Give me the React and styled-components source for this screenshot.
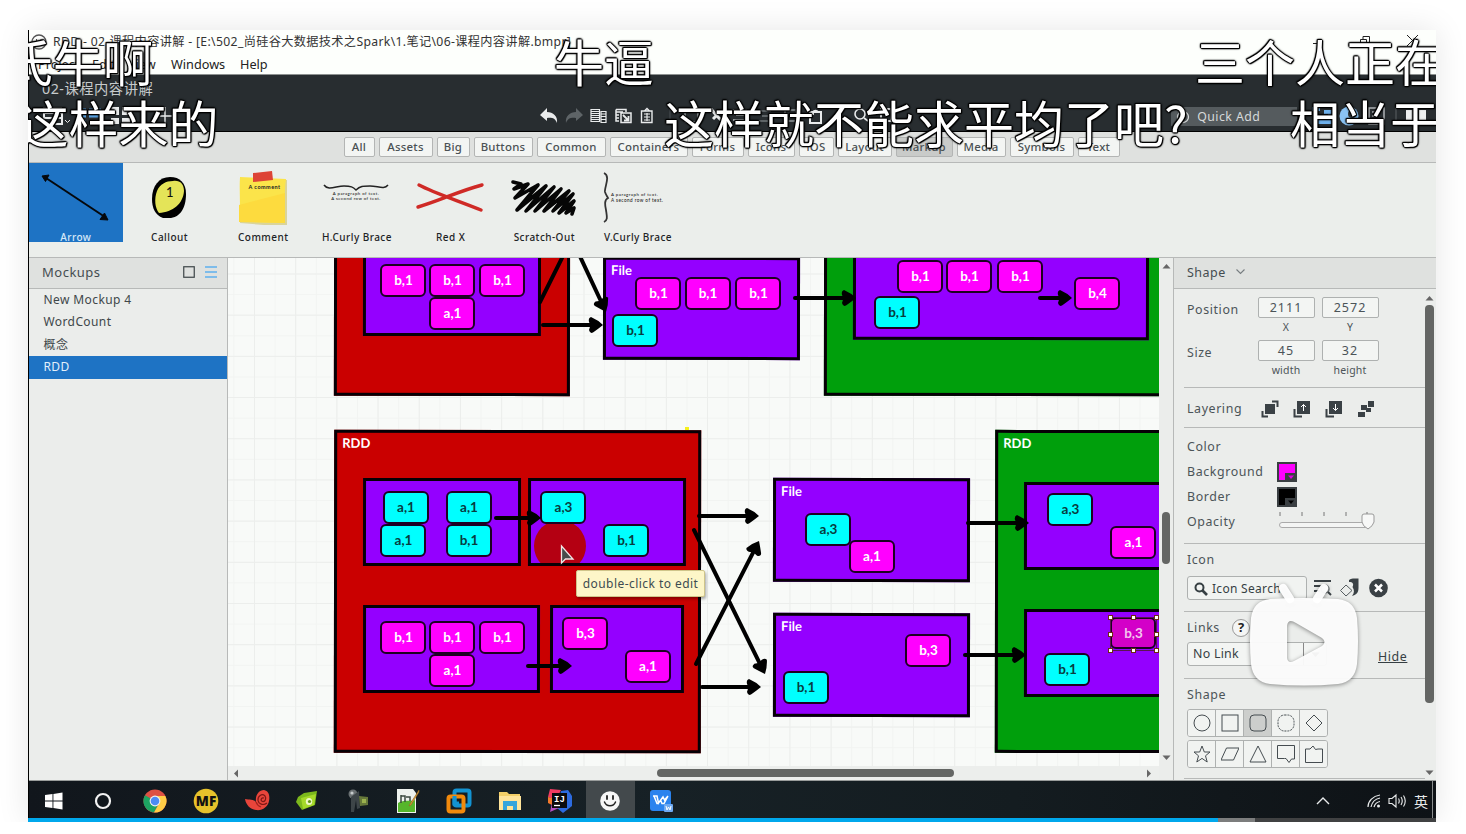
import React from 'react';
import styled, { createGlobalStyle, css } from 'styled-components';

const UI = `"Noto Sans", "Noto Sans CJK SC", sans-serif`;
const LINE = '#b7b9b8';

const Global = createGlobalStyle`
  * { box-sizing: border-box; }
  body { margin: 0; background: #fff; font-family: ${UI}; }
  svg { display: block; flex: none; }
`;

/* ---------- frame ---------- */
const Page = styled.main`
  width: 1466px;
  height: 834px;
  padding: 30px 30px 12px 28px;
  overflow: hidden;
  background: #fff;
`;
const Frame = styled.div`
  position: relative;
  width: 1408px;
  height: 792px;
  box-shadow: 0 0 30px rgba(0, 0, 0, 0.1);
`;
const Screen = styled.div`
  height: 788px;
  display: flex;
  flex-direction: column;
  border-left: 1px solid #000;
  overflow: hidden;
  background: #fdfffc;
`;
const Footing = styled.div`
  height: 12px;
  margin: 0 -28px;
  background: #fff;
  position: relative;
`;

/* ---------- window chrome ---------- */
const TitleBar = styled.header`
  height: 24px;
  flex: none;
  display: flex;
  align-items: center;
  padding: 0 18px 0 2px;
  gap: 6px;
  font-size: 12.2px;
  line-height: 16px;
  color: #333;
`;
const Title = styled.span`
  flex: 1;
  white-space: pre;
  letter-spacing: 0.34px;
`;
const WindowButtons = styled.div`
  display: flex;
  gap: 37px;
  align-items: center;
  padding-bottom: 3px;
`;
const MenuBar = styled.nav`
  height: 21px;
  flex: none;
  display: flex;
  align-items: center;
  padding-left: 9px;
  border-bottom: 1px solid #8d9190;
  font-size: 12.7px;
  line-height: 16px;
  color: #222;
`;
const MenuItem = styled.span`
  width: ${(p) => p.$w}px;
  white-space: nowrap;
`;
const DarkHeader = styled.div`
  height: 57px;
  flex: none;
  background: #282d30;
  border-bottom: 1px solid #000;
  color: #c6cacb;
`;
const ProjectName = styled.div`
  height: 30px;
  padding: 5px 0 0 13px;
  font-size: 14.3px;
  line-height: 18px;
  letter-spacing: 0.5px;
`;
const Toolbar = styled.div`
  display: flex;
  align-items: center;
  height: 22px;
  padding: 0 10px 0 14px;
`;
const ToolGroup = styled.div`
  display: flex;
  align-items: center;
  gap: ${(p) => p.$gap || 0}px;
  width: ${(p) => p.$w}px;
`;
const QuickAdd = styled.div`
  width: 126px;
  height: 19px;
  margin-right: 13px;
  display: flex;
  align-items: center;
  gap: 7px;
  padding: 1px 0 0 5px;
  background: #555b5e;
  font-size: 12.3px;
  line-height: 16px;
  letter-spacing: 0.45px;
  color: #d6d9da;
`;

/* ---------- library ---------- */
const Categories = styled.div`
  height: 31px;
  flex: none;
  display: flex;
  align-items: center;
  gap: 4px;
  padding: 0 0 1px 315px;
  background: #dfe1df;
  border-bottom: 1px solid ${LINE};
`;
const Category = styled.span`
  width: ${(p) => p.$w}px;
  height: 20px;
  padding-right: 1px;
  border: 1px solid #b3b5b4;
  border-radius: 2px;
  background: ${(p) => (p.$on ? '#c9cbc9' : '#f3f5f3')};
  color: #4a5154;
  font-size: 11.4px;
  font-weight: 500;
  line-height: 17px;
  letter-spacing: 0.25px;
  text-align: center;
  white-space: nowrap;
`;
const Library = styled.div`
  height: 95px;
  flex: none;
  display: flex;
  background: #ebeeeb;
  border-bottom: 1px solid ${LINE};
`;
const LibraryItem = styled.div`
  width: 93.7px;
  height: 79px;
  display: flex;
  flex-direction: column;
  align-items: center;
  background: ${(p) => (p.$on ? '#1e73c4' : 'transparent')};
  color: ${(p) => (p.$on ? '#d7e8f8' : '#1d2326')};
  font-size: 10px;
  font-weight: 500;
  line-height: 12px;
  letter-spacing: 0.45px;
  white-space: nowrap;
`;

/* ---------- body ---------- */
const Body = styled.div`
  height: 523px;
  flex: none;
  display: flex;
  border-bottom: 1px solid #999c9b;
`;
const Sidebar = styled.aside`
  width: 199px;
  background: #ebedeb;
  border-right: 1px solid ${LINE};
`;
const PanelHead = styled.div`
  height: 31px;
  display: flex;
  align-items: center;
  padding: 0 10px 2px ${(p) => p.$left}px;
  gap: 10px;
  background: #dfe1df;
  border-bottom: 1px solid ${LINE};
  color: #454d51;
  font-size: ${(p) => p.$size || 13}px;
  letter-spacing: 0.5px;
`;
const Grow = styled.span`
  flex: 1;
`;
const MockupRow = styled.div`
  height: 22.4px;
  padding-left: 14.5px;
  font-size: 12px;
  line-height: 22px;
  letter-spacing: 0.4px;
  color: ${(p) => (p.$on ? '#e3effa' : '#40474a')};
  background: ${(p) => (p.$on ? '#1e73c4' : 'transparent')};
`;
const CanvasColumn = styled.div`
  width: 931px;
  display: flex;
  flex-direction: column;
`;
const Canvas = styled.div`
  position: relative;
  height: 508px;
  overflow: hidden;
  background-color: #f8faf8;
  background-image:
    linear-gradient(90deg, #eceeec 1px, transparent 1px),
    linear-gradient(#eceeec 1px, transparent 1px),
    linear-gradient(90deg, #f2f4f2 1px, transparent 1px),
    linear-gradient(#f2f4f2 1px, transparent 1px);
  background-size: 41.2px 41.2px, 41.2px 41.2px, 20.6px 20.6px, 20.6px 20.6px;
  background-position: 26px 15.5px;
`;
const HScroll = styled.div`
  height: 14px;
  display: flex;
  align-items: center;
  padding: 0 6px 0 4px;
  background: #eceeec;
`;
const HThumb = styled.div`
  width: 297px;
  flex: none;
  height: 8px;
  margin: 0 auto 0 416px;
  border-radius: 4px;
  background: #646664;
`;
const VScroll = styled.div`
  width: 15px;
  display: flex;
  flex-direction: column;
  align-items: center;
  padding: 4px 0 18px;
  background: #ebedeb;
  border-right: 1px solid ${LINE};
`;
const VThumb = styled.div`
  width: ${(p) => p.$w}px;
  height: ${(p) => p.$h}px;
  margin: ${(p) => p.$top}px 0 auto;
  border-radius: 4px;
  background: #646664;
`;

/* ---------- diagram nodes ---------- */
const place = css`
  position: absolute;
  left: ${(p) => p.$x - 228}px;
  top: ${(p) => p.$y - 258}px;
  width: ${(p) => p.$w}px;
  height: ${(p) => p.$h}px;
`;
const Box = styled.div`
  ${place}
  background: ${(p) => p.$fill};
  border: 3px solid #060006;
  padding: 2px 0 0 5px;
  color: #fff;
  font: 700 13px/17px Lato, sans-serif;
  transform: skewX(-0.08deg) skewY(0.08deg);
`;
const Chip = styled.div`
  ${place}
  border: 2.5px solid #1d0022;
  border-radius: 6px;
  background: ${(p) => (p.$cyan ? '#00ffff' : p.$dim ? '#d300c8' : '#ff00ff')};
  color: ${(p) => (p.$cyan ? '#083c40' : p.$dim ? '#f3c6ee' : '#fff')};
  font: 700 13.5px/28px "Lato", sans-serif;
  padding-left: 1px;
  text-align: center;
`;
const Spot = styled.div`
  ${place}
  background: #b40012;
  clip-path: circle(26px at 50% 26px);
`;
const Handle = styled.i`
  ${place}
  background: #fff;
  border: 1px solid #6d2a10;
`;
const Selection = styled.div`
  ${place}
  border: 1px solid #5b1550;
`;
const Sparkle = styled.i`
  ${place}
  background: #f6f01c;
`;
const Arrows = styled.svg`
  position: absolute;
  inset: 0;
`;
const Tooltip = styled.div`
  ${place}
  background: #fdf6c8;
  border: 1px solid #cfc58a;
  border-radius: 2px;
  box-shadow: 1px 2px 3px rgba(0, 0, 0, 0.35);
  color: #3e4c50;
  font-size: 12px;
  line-height: 26px;
  letter-spacing: 0.45px;
  text-align: center;
  white-space: nowrap;
`;

/* ---------- inspector ---------- */
const Inspector = styled.aside`
  width: 262px;
  background: #ebedeb;
`;
const InspectorBody = styled.div`
  display: flex;
  height: 491px;
  padding: 0 2px 0 10px;
`;
const Sections = styled.div`
  width: 241px;
`;
const Section = styled.section`
  height: ${(p) => p.$h}px;
  padding: ${(p) => p.$top || 0}px 0 0 3px;
  border-bottom: 1px solid ${LINE};
  color: #4b5458;
  font-size: 12.4px;
  letter-spacing: 0.6px;
`;
const Row = styled.div`
  display: flex;
  align-items: ${(p) => p.$align || 'center'};
  height: ${(p) => p.$h}px;
`;
const Label = styled.span`
  width: ${(p) => p.$w}px;
  flex: none;
  white-space: nowrap;
  line-height: 16px;
  padding-top: ${(p) => p.$top || 0}px;
`;
const Field = styled.label`
  width: 57px;
  margin-right: 7px;
  text-align: center;
  font-size: 10.5px;
  line-height: 19px;
  letter-spacing: 0.2px;
`;
const Input = styled.span`
  display: block;
  height: 21px;
  border: 1px solid #aeb1b0;
  border-radius: 2px;
  background: #f3f5f3;
  font-size: 12.5px;
  letter-spacing: 1px;
  line-height: 20px;
`;
const Swatch = styled.span`
  display: flex;
  align-items: flex-end;
  justify-content: flex-end;
  width: 20px;
  height: 20px;
  border: 2px solid #3a3f42;
  background: ${(p) => p.$c};
`;
const SearchButton = styled.span`
  display: flex;
  align-items: center;
  gap: 4px;
  width: 120px;
  flex: none;
  height: 24px;
  padding: 1px 0 0 6px;
  border: 1px solid #aeb1b0;
  border-radius: 3px;
  background: #f1f3f1;
  font-size: 12px;
  letter-spacing: 0.3px;
  color: #363f43;
`;
const Help = styled.b`
  width: 18px;
  height: 18px;
  border: 1.5px solid #999;
  border-radius: 50%;
  background: #f5f6f5;
  font-size: 13px;
  line-height: 15px;
  text-align: center;
  letter-spacing: 0;
  color: #222;
`;
const Select = styled.span`
  display: flex;
  width: 140px;
  flex: none;
  height: 24px;
  border: 1px solid #aeb1b0;
  border-radius: 3px;
  background: #f3f5f3;
  padding-left: 5px;
  line-height: 22px;
  letter-spacing: 0.25px;
  color: #363f43;
`;
const SelectArrow = styled.span`
  display: flex;
  align-items: center;
  justify-content: center;
  margin-left: auto;
  width: 23px;
  border-left: 1px solid #888;
`;
const HideLink = styled.span`
  margin: 6px 0 0 51px;
  text-decoration: underline;
  line-height: 16px;
  color: #363f43;
`;
const ShapeRow = styled.div`
  display: flex;
  width: 141px;
  height: 28px;
  margin-bottom: 3px;
  border: 1px solid #aeb1b0;
  border-radius: 3px;
  overflow: hidden;
`;
const ShapeCell = styled.span`
  flex: 1;
  display: flex;
  align-items: center;
  justify-content: center;
  background: ${(p) => (p.$on ? '#cccecc' : '#f1f3f1')};
  & + & { border-left: 1px solid #aeb1b0; }
`;
const InspectorScroll = styled.div`
  width: 9px;
  display: flex;
  flex-direction: column;
  align-items: center;
  padding: 5px 0 3px;
`;

/* ---------- taskbar ---------- */
const Taskbar = styled.footer`
  height: 37px;
  flex: none;
  display: flex;
  align-items: center;
  background: linear-gradient(90deg, #11161c, #172126 45%, #141c20 70%, #0e1216);
  padding-right: 3px;
`;
const TaskItem = styled.span`
  width: 50.6px;
  height: 37px;
  padding-top: 3px;
  display: flex;
  align-items: center;
  justify-content: center;
`;
const TaskTile = styled(TaskItem)`
  width: 49px;
  margin-right: 1.6px;
  background: #43494c;
`;
const Tray = styled.div`
  margin-left: auto;
  display: flex;
  align-items: center;
  height: 37px;
  padding: 2px 4px 0 0;
  border-right: 1px solid #8a8d8e;
  color: #e8eaea;
  font: 14px/20px "Noto Sans CJK SC", sans-serif;
`;
const TrayGap = styled.i`
  width: ${(p) => p.$w}px;
`;
const Progress = styled.div`
  height: 4px;
  display: flex;
  background: #404142;
`;
const Played = styled.i`
  width: 1190px;
  background: #00a8ec;
`;
const Buffered = styled.i`
  width: 37px;
  background: #7c7d7d;
`;

/* ---------- video overlay ---------- */
const CommentLayer = styled.div`
  position: absolute;
  inset: 0;
  overflow: hidden;
  pointer-events: none;
`;
const FlyingComment = styled.span`
  position: absolute;
  left: ${(p) => p.$x}px;
  top: ${(p) => p.$row * 61 - 5}px;
  font: 400 50px/70px "Noto Sans CJK SC", sans-serif;
  color: #fff;
  white-space: nowrap;
  text-shadow: 1px 0 1px #000, -1px 0 1px #000, 0 1px 1px #000, 0 -1px 1px #000, 1px 1px 1px #000, -1px -1px 1px #000,
    0 0 2px #000, 0 0 3px #000;
`;
const PlayBadge = styled.svg`
  position: absolute;
  left: 1212px;
  top: 544px;
`;

const categories = [
  ['All', 31], ['Assets', 54], ['Big', 33], ['Buttons', 59], ['Common', 69], ['Containers', 78], ['Forms', 52],
  ['Icons', 47], ['iOS', 35], ['Layout', 54], ['Markup', 57], ['Media', 49], ['Symbols', 64], ['Text', 42],
];

const RED = '#ca0000';
const PURPLE = '#9400ff';
const GREEN = '#009f0c';
const boxes = [
  [334, 200, 236, 196, RED], [363, 200, 178, 136, PURPLE],
  [603, 257, 197, 103, PURPLE, 'File'],
  [824, 200, 360, 196, GREEN], [853, 200, 296, 140, PURPLE],
  [334, 430, 367, 323, RED, 'RDD'],
  [363, 478, 158, 88, PURPLE], [528, 478, 158, 88, PURPLE],
  [363, 605, 177, 88, PURPLE], [550, 605, 134, 88, PURPLE],
  [773, 478, 197, 104, PURPLE, 'File'], [773, 613, 197, 104, PURPLE, 'File'],
  [995, 430, 200, 323, GREEN, 'RDD'],
  [1024, 482, 170, 88, PURPLE], [1024, 609, 170, 88, PURPLE],
];
const chips = [
  [380, 264, 'b,1'], [429, 264, 'b,1'], [479, 264, 'b,1'], [429, 297, 'a,1'],
  [635, 277, 'b,1'], [684.5, 277, 'b,1'], [735, 277, 'b,1'], [612, 314, 'b,1', 1],
  [897, 260, 'b,1'], [946, 260, 'b,1'], [997, 260, 'b,1'], [874, 296, 'b,1', 1], [1074, 277, 'b,4'],
  [382.5, 491, 'a,1', 1], [445.5, 491, 'a,1', 1], [380, 524, 'a,1', 1], [445.5, 524, 'b,1', 1],
  [540, 491, 'a,3', 1], [603, 524, 'b,1', 1],
  [380, 621, 'b,1'], [429, 621, 'b,1'], [479, 621, 'b,1'], [429, 654, 'a,1'], [562, 617, 'b,3'], [624.5, 650, 'a,1'],
  [805, 513, 'a,3', 1], [848.5, 540, 'a,1'], [905, 634, 'b,3'], [782.5, 671, 'b,1', 1],
  [1047, 493, 'a,3', 1], [1110, 526, 'a,1'], [1044, 653, 'b,1', 1],
];
const arrows = [
  [543, 325, 603, 325], [577, 250, 606, 312], [795, 298, 856, 298], [1040, 298, 1072, 298],
  [496, 518, 541, 518], [528, 666, 572, 666], [699, 516, 759, 516], [702, 687, 761, 687],
  [694, 530, 765, 674], [696, 664, 759, 541], [968, 523, 1029, 523], [965, 655, 1026, 655],
];
const handles = [
  [1108, 615], [1131, 615], [1154, 615], [1108, 632], [1154, 632], [1108, 648], [1131, 648], [1154, 648],
];

const Arrow = ({ p: [x1, y1, x2, y2] }) => {
  const a = Math.atan2(y2 - y1, x2 - x1);
  const bx = x2 - 8 * Math.cos(a);
  const by = y2 - 8 * Math.sin(a);
  return (
    <g>
      <line x1={x1} y1={y1} x2={bx} y2={by} stroke="#000" strokeWidth="4" strokeLinecap="round" />
      <path
        d="M0 0 Q-5 -5 -12 -8 Q-15 -7 -14 -3 L-12.500 0 L-14 5 Q-13 9 -10 7.500 Q-5 4 0 0Z"
        transform={`translate(${x2} ${y2}) rotate(${(a * 180) / Math.PI})`}
      />
    </g>
  );
};

const Tri = ({ dir = 'up', c = '#666' }) => (
  <svg width="9" height="9" viewBox="0 0 9 9">
    <path d={{ up: 'M4.5 2L8.5 6.5H.5z', down: 'M.5 2.5H8.5L4.5 7z', left: 'M2 4.5L6 .5V8.5z', right: 'M7 4.5L3 .5V8.5z' }[dir]} fill={c} />
  </svg>
);

const S = ({ w = 18, h = 18, children, ...r }) => (
  <svg width={w} height={h} viewBox={`0 0 ${w} ${h}`} fill="none" {...r}>{children}</svg>
);

const libraryArt = {
  Arrow: (
    <S w={94} h={68}>
      <path d="M17 15L76 54" stroke="#05080c" strokeWidth="2" />
      <path d="M13 13l7-1-3.500 6.500zM79 57l-8-.5 4.500-6.500z" fill="#05080c" stroke="#05080c" />
    </S>
  ),
  Callout: (
    <S w={94} h={68}>
      <path d="M47 14C57 14 63 20 63 31C63 45 57 55 46 55H40C32 52 29 45 29 36C29 23 36 14 47 14Z" fill="#000" />
      <path d="M50 18C57 17 61 21 61 28C60 41 50 49 36 50C32 45 31 36 34 28C37 21 43 18 50 18Z" fill="#e4e458" />
      <text x="43" y="34" fontSize="13" fill="#111" fontFamily="Lato">1</text>
    </S>
  ),
  Comment: (
    <S w={94} h={68}>
      <path d="M23 15L70 16L70 61L47 61L23 59Z" fill="#c9b94a" opacity=".5" transform="translate(1 1)" />
      <path d="M24 14L70 16C68 30 69 45 69 60L23 59C25 40 23 30 24 14Z" fill="#fbe44a" />
      <path d="M23 42L69 30V60L23 59Z" fill="#fddb3e" />
      <path d="M37 10L56 8L57 17L37 19Z" fill="#dd4436" />
      <text x="32.500" y="26" fontSize="5.500" fontWeight="700" fill="#222" fontFamily="Lato">A comment</text>
    </S>
  ),
  'H.Curly Brace': (
    <S w={94} h={68}>
      <path d="M14 22C18 28 26 23 34 23C41 23 43 24 46 27C50 23 53 23 60 23C68 23 74 27 78 22" stroke="#222" strokeWidth="1.500" />
      <text x="46" y="32" textAnchor="middle" fontSize="4.300" fill="#222" fontFamily="Lato">A paragraph of text.</text>
      <text x="46" y="37" textAnchor="middle" fontSize="4.300" fill="#222" fontFamily="Lato">A second row of text.</text>
    </S>
  ),
  'Red X': (
    <S w={94} h={68}>
      <path d="M15 22C30 30 55 38 77 47M14 44C35 38 55 28 78 22" stroke="#cf2a26" strokeWidth="3.400" strokeLinecap="round" />
    </S>
  ),
  'Scratch-Out': (
    <S w={94} h={68}>
      <path d="M16 19L24 21L17 26L31 21L18 35L41 22L20 47L49 23L29 48L57 24L38 48L64 26L47 48L72 28L56 48L76 31L62 50L77 38L69 50L77 45L75 51" stroke="#060606" strokeWidth="3.600" strokeLinejoin="round" strokeLinecap="round" />
    </S>
  ),
  'V.Curly Brace': (
    <S w={94} h={68}>
      <path d="M13 10C20 13 13 25 14 29C15 32 16 33 17 35C13 37 14 42 15 47C16 54 17 57 13 59" stroke="#333" strokeWidth="1.800" />
      <text x="20" y="33" fontSize="4.400" fill="#222" fontFamily="Lato">A paragraph of text.</text>
      <text x="20" y="39" fontSize="4.600" fill="#222" fontFamily="Lato">A second row of text.</text>
    </S>
  ),
};

const shapes = [
  [
    <circle cx="9" cy="9" r="8" />, <rect x="1" y="1" width="16" height="16" />, <rect x="1" y="1" width="16" height="16" rx="4" />,
    <rect x="1" y="1" width="16" height="16" rx="6.500" strokeDasharray="2 1" />, <path d="M9 1L17 9L9 17L1 9Z" />,
  ],
  [
    <path d="M9 1L11.300 7H17L12.500 10.800L14.200 17L9 13.400L3.800 17L5.500 10.800L1 7H6.700Z" />, <path d="M5.500 3H18L12.500 15H0Z" />,
    <path d="M9 1L17 17H1Z" />, <path d="M.5 .5H17.500V14H14.500L12 17.500L9 13.500H7.500H.5Z" />,
    <path d="M.5 4H5L8 1L10.500 4.500L13 4H17.500V17.500H.5Z" />,
  ],
];

const ink = '#e9ebec';
const taskIcons = [
  <S w={18} h={18}><path d="M0 3L7.500 2V8.600H0zM8.400 1.900L17.500 .6V8.600H8.400zM0 9.400H7.500V16L0 15zM8.400 9.400H17.500V17.400L8.400 16.100z" fill="#fff" /></S>,
  <S w={21}><circle cx="9" cy="9" r="7" stroke="#f3f3f3" strokeWidth="2.200" /></S>,
  <S w={24} h={24}>
    <circle cx="12" cy="12" r="11.500" fill="#dd5144" />
    <path d="M12 12L2 6.200A11.500 11.500 0 0 0 11 23.500L16 14Z" fill="#1da462" />
    <path d="M12 7H22.300A11.500 11.500 0 0 1 11 23.500L16.500 14Z" fill="#ffcd46" />
    <circle cx="12" cy="12" r="5.400" fill="#f1f1f1" /><circle cx="12" cy="12" r="4.300" fill="#4c8bf5" />
  </S>,
  <S w={26} h={26}><circle cx="13" cy="13" r="12.300" fill="#e6c22b" /><text x="13" y="18" textAnchor="middle" fontSize="13.500" fontWeight="900" fill="#111" fontFamily="Noto Sans">MF</text></S>,
  <S w={26} h={24}>
    <path d="M1 10C5 11 10 10 12 13C11 6 15 1 20 1C25 2 26 7 25 12C24 18 18 22 12 21C6 20 2 16 1 10Z" fill="#e8453b" />
    <path d="M20 9C17 8 16 12 18.500 12.500C21.500 13 22.500 9 21 7C18 4 13.500 7 14 11.500C14.500 15 19 17 23 14" stroke="#7d1714" strokeWidth="1.200" />
    <path d="M12 13C13 16 14 17 17 18" stroke="#a3221d" strokeWidth="1.200" />
  </S>,
  <S w={24} h={22}>
    <path d="M3 7L9 3L22 1L20 15L7 20L1 12Z" fill="#7cb81c" /><path d="M6 8L21 4L19 15L8 19Z" fill="#a5d92a" />
    <ellipse cx="14" cy="11.500" rx="3.200" ry="3.600" fill="#eef7c6" /><circle cx="14.500" cy="11.500" r="1.600" fill="#649718" />
  </S>,
  <S w={24} h={26}>
    <circle cx="7" cy="6" r="4.500" fill="#6a7072" /><circle cx="6" cy="5" r="1.600" fill="#c7cccd" /><path d="M5 9L13 3L14 20L11 21L10 12L8 24H5Z" fill="#3d4548" />
    <path d="M13 8L22 9V17L14 18Z" fill="#66783a" /><path d="M16 11H20V15H16Z" fill="#9bb14e" />
  </S>,
  <S w={24} h={26}>
    <path d="M1 1H17L20 5V25H1Z" fill="#eef2ee" /><path d="M2 15C8 11 14 14 19 12V24H2Z" fill="#56b62b" /><path d="M5 7V15M5 8H9V14M10 9H14V13" stroke="#3c4a40" strokeWidth="1.500" />
    <path d="M23 2L14 16L13 18L15 17L23 4Z" fill="#e2a43d" stroke="#8f6220" strokeWidth=".6" />
  </S>,
  <S w={26} h={26}>
    <rect x="8.500" y="2.500" width="15" height="15" rx="2" stroke="#1393d2" strokeWidth="4" />
    <rect x="2.500" y="8.500" width="15" height="15" rx="2" stroke="#f28a0c" strokeWidth="4" /><path d="M8.500 8V15.500H13" stroke="#1393d2" strokeWidth="4" />
  </S>,
  <S w={24} h={22}>
    <path d="M1 2H9L11 4H22V20H1Z" fill="#f3cf68" /><path d="M1 6H23V20H1Z" fill="#ffe49a" /><path d="M5 20V11H19V20H15V16H9V20Z" fill="#35a5dc" />
  </S>,
  <S w={26} h={26}>
    <path d="M3 1L14 2L9 12L1 9Z" fill="#f23b62" /><path d="M1 9L9 11L5 17L1 15Z" fill="#f47a2c" /><path d="M14 3L21 2L25 8V18L16 25L10 20Z" fill="#2d6be0" /><path d="M3 24L5 15L12 20Z" fill="#b44fc1" />
    <rect x="5" y="5" width="15" height="15" fill="#0b0b0e" /><text x="7" y="14" fontSize="9" fontWeight="700" fill="#fff" fontFamily="Liberation Mono">IJ</text><path d="M7 17.500H13" stroke="#fff" strokeWidth="1.300" />
  </S>,
  <S w={22} h={22}>
    <circle cx="11" cy="11" r="9.800" fill="#f6f6f6" /><path d="M8 6V9M14 6V9" stroke="#222" strokeWidth="1.800" strokeLinecap="round" /><path d="M5.500 12C7.500 17 14.500 17 16.500 12" stroke="#222" strokeWidth="1.500" strokeLinecap="round" />
  </S>,
  <S w={24} h={24}>
    <rect x="1" y="1" width="21" height="21" rx="3" fill="#2b83ee" /><path d="M4 7H8L9.500 14L14 8L15.500 11L19 7M5 7L8 14.500H10M19 7L15 14.500H13L11.500 11" stroke="#fff" strokeWidth="1.500" />
    <rect x="15" y="15" width="9" height="8" rx="1" fill="#6fa9f0" /><path d="M17 17L18 21L19.500 18L21 21L22 17" stroke="#fff" />
  </S>,
];

export default function App() {
  return (
    <>
      <Global />
      <Page>
        <Frame>
          <Screen>
            <TitleBar>
              <S w={16} h={16}><circle cx="8" cy="8" r="7" stroke="#555" strokeWidth="1.300" /><path d="M5.500 5V7M10 5V7M4.500 9.500C6 12 10 12 11.500 9.500" stroke="#555" /></S>
              <Title>{'RDD - 02-课程内容讲解 - [E:\\502_尚硅谷大数据技术之Spark\\1.笔记\\06-课程内容讲解.bmpr]'}</Title>
              <WindowButtons>
                <S w={10} h={10}><path d="M0 7.500H10" stroke="#222" /></S>
                <S w={10} h={10}><path d="M.5 3.500H6.500V9.500H.5zM3 3V.5H9.500V7H7" stroke="#222" /></S>
                <S w={11} h={11}><path d="M0 0L11 11M11 0L0 11" stroke="#222" /></S>
              </WindowButtons>
            </TitleBar>
            <MenuBar>
              <MenuItem $w={54}>Project</MenuItem>
              <MenuItem $w={36}>Edit</MenuItem>
              <MenuItem $w={43}>View</MenuItem>
              <MenuItem $w={69}>Windows</MenuItem>
              <MenuItem $w={40}>Help</MenuItem>
            </MenuBar>
            <DarkHeader>
              <ProjectName>02-课程内容讲解</ProjectName>
              <Toolbar>
                <ToolGroup $w={498} $gap={9}>
                  <S w={30} h={20}><path d="M0 2H19M1 7H19V18H1zM1 12H19" stroke={ink} strokeWidth="2" /><path d="M22 14L24.500 16.500L27 14" stroke={ink} /></S>
                  <S w={20} h={20}><path d="M1 4H4M7 4H19M1 10H4M7 10H19M1 16H4M7 16H19" stroke="#5aa4e6" strokeWidth="3" /></S>
                  <S w={20} h={20}><path d="M0 1H8V9H0zM11 1H19V9H11zM0 12H8V18H0zM11 12H19V18H11z" fill={ink} /></S>
                  <S w={34} h={20}><path d="M25 1V19M16 10H34" stroke={ink} strokeWidth="1.400" /></S>
                </ToolGroup>
                <ToolGroup $w={632} $gap={7}>
                  <S><path d="M0 8L7 1V5C13 5 18 9 17 16C15 11 12 10.500 7 11V14Z" fill={ink} /></S>
                  <S><path d="M18 8L11 1V5C5 5 0 9 1 16C3 11 6 10.500 11 11V14Z" fill="#5e6467" /></S>
                  <S><path d="M1 2.500H9.500V14.500H1zM11 4.500H16V15.500H11zM1 4.500H9M1 6.500H9M1 8.500H9M1 10.500H9M1 12.500H9M11 7H16M11 9.500H16M11 12.500H16" stroke={ink} strokeWidth="1.200" /></S>
                  <S><path d="M1 2.500H11V5M1 2.500V14H4M1 5H8M1 8H4M1 11H4M6 6H16V15.500H6z" stroke={ink} strokeWidth="1.500" /><path d="M8 8L13 13M13.500 9V13.500H9" stroke={ink} strokeWidth="1.800" /></S>
                  <S w={14}><path d="M1.500 4H12V15.500H1.500zM4.500 4L7 1.500L9.500 4" stroke={ink} strokeWidth="1.400" /><path d="M4 7H10M4 10H10M4 13H10M7 6V14" stroke={ink} strokeWidth="1.200" /></S>
                  <S w={14}><path d="M9 1V17" stroke="#4b5154" /></S>
                  <S><rect x="3" y="3" width="13" height="12" rx="2" stroke="#888e91" strokeWidth="2" /></S>
                  <S><path d="M4 2L10 9L15 14M11 7L6 12" stroke={ink} strokeWidth="3" /></S>
                  <S><path d="M1 3H15M4 8H15M1 13H15" stroke="#9ba0a2" strokeWidth="2" /></S>
                  <S><path d="M2 4H14M5 9H12M2 14H14" stroke="#5e6467" strokeWidth="2" /></S>
                  <S><path d="M3 3H14V14H3z" stroke="#777d80" strokeWidth="2" /></S>
                  <S><path d="M3 5H14V16H3zM6 8V5A3 3 0 0 1 11 5" stroke={ink} strokeWidth="2" /></S>
                  <S w={14}><path d="M7 1V17" stroke="#4b5154" /></S>
                  <S><circle cx="7" cy="7" r="5" stroke={ink} strokeWidth="1.600" /><path d="M11 11L15 14" stroke={ink} strokeWidth="1.600" /></S>
                  <S><path d="M3 2H13V14H3z" stroke={ink} strokeWidth="2" /></S>
                </ToolGroup>
                <QuickAdd>
                  <S w={14} h={14}><circle cx="7" cy="7" r="5.500" stroke="#d6d9da" strokeWidth="1.300" /></S>
                  Quick Add
                </QuickAdd>
                <ToolGroup $gap={6}>
                  <S w={22} h={20}><path d="M2 3H10M14 6H20V16H10V12" stroke="#6fb1ec" strokeWidth="4" /></S>
                  <S w={22} h={22}><circle cx="11" cy="11" r="9.500" fill="#8ac3f4" /><circle cx="14" cy="9" r="4" fill="#33393c" /></S>
                  <S w={20} h={20}><path d="M3 2H18V18H3zM6 6H15M6 10H12" stroke="#aeb3b5" strokeWidth="1.500" /></S>
                  <S w={8} h={20}><path d="M4 1V19" stroke="#5a6063" /></S>
                  <S w={20} h={20}><rect y="4" width="20" height="11" fill="#eef0f0" /><path d="M12 4V15" stroke="#282d30" strokeWidth="2" /></S>
                </ToolGroup>
              </Toolbar>
            </DarkHeader>
            <Categories>
              {categories.map(([name, w]) => <Category key={name} $w={w} $on={name === 'Markup'}>{name}</Category>)}
            </Categories>
            <Library>
              {Object.entries(libraryArt).map(([name, art]) => (
                <LibraryItem key={name} $on={name === 'Arrow'}>{art}{name}</LibraryItem>
              ))}
            </Library>
            <Body>
              <Sidebar>
                <PanelHead $left={13}>
                  Mockups
                  <Grow />
                  <S w={12} h={12}><rect x=".75" y=".75" width="10.500" height="10.500" stroke="#3c4447" strokeWidth="1.200" /></S>
                  <S w={12} h={12}><path d="M0 1H12M0 6H12M0 11H12" stroke="#5fb0ee" strokeWidth="1.300" /></S>
                </PanelHead>
                {['New Mockup 4', 'WordCount', '概念', 'RDD'].map((m) => <MockupRow key={m} $on={m === 'RDD'}>{m}</MockupRow>)}
              </Sidebar>
              <CanvasColumn>
                <Canvas>
                  {boxes.map(([x, y, w, h, c, t], i) => <Box key={i} $x={x} $y={y} $w={w} $h={h} $fill={c}>{t}</Box>)}
                  <Spot $x={534} $y={520} $w={52} $h={43} />
                  {chips.map(([x, y, t, cyan], i) => <Chip key={i} $x={x} $y={y} $w={46} $h={33} $cyan={cyan}>{t}</Chip>)}
                  <Chip $x={1110} $y={617} $w={46} $h={32} $dim>b,3</Chip>
                  <Selection $x={1110} $y={617} $w={47} $h={34} />
                  {handles.map(([x, y], i) => <Handle key={i} $x={x} $y={y} $w={5} $h={5} />)}
                  <Sparkle $x={685} $y={427} $w={4} $h={3} />
                  <Arrows width="931" height="508" viewBox="228 258 931 508">
                    <path d="M540 302L563 256" stroke="#000" strokeWidth="4" strokeLinecap="round" />
                    {arrows.map((p, i) => <Arrow key={i} p={p} />)}
                    <path d="M561.500 546V563L565.500 559H573Z" fill="#474b4b" stroke="#f1e5e5" strokeWidth="1.300" />
                  </Arrows>
                  <Tooltip $x={576} $y={570} $w={129} $h={27}>double-click to edit</Tooltip>
                </Canvas>
                <HScroll>
                  <Tri dir="left" /><HThumb /><Tri dir="right" />
                </HScroll>
              </CanvasColumn>
              <VScroll>
                <Tri /><VThumb $w={8} $h={52} $top={241} /><Tri dir="down" />
              </VScroll>
              <Inspector>
                <PanelHead $left={13} $size={12.5}>
                  Shape
                  <S w={9} h={6}><path d="M.5 .5L4.500 4.500L8.500 .5" stroke="#777d80" strokeWidth="1.100" /></S>
                </PanelHead>
                <InspectorBody>
                  <Sections>
                    <Section $h={99} $top={8}>
                      <Row $h={43} $align="flex-start">
                        <Label $w={70.5} $top={5}>Position</Label>
                        <Field><Input>2111</Input>X</Field>
                        <Field><Input>2572</Input>Y</Field>
                      </Row>
                      <Row $h={43} $align="flex-start">
                        <Label $w={70.5} $top={5}>Size</Label>
                        <Field><Input>45</Input>width</Field>
                        <Field><Input>32</Input>height</Field>
                      </Row>
                    </Section>
                    <Section $h={40} $top={3}>
                      <Row $h={36}>
                        <Label $w={74}>Layering</Label>
                        <ToolGroup $gap={14}>
                          <S><path d="M4 4H14V14H4z" fill="#3a4145" /><path d="M11 1.500H16.500V7M1.500 11V16.500H7" stroke="#3a4145" strokeWidth="2" /></S>
                          <S><path d="M4 1H17V14H4z" fill="#3a4145" /><path d="M1.500 9V16.500H9" stroke="#3a4145" strokeWidth="2" /><path d="M10.500 11V4.500M8 7L10.500 4.500L13 7" stroke="#fff" /></S>
                          <S><path d="M4 1H17V14H4z" fill="#3a4145" /><path d="M1.500 9V16.500H9" stroke="#3a4145" strokeWidth="2" /><path d="M10.500 4V10.500M8 8L10.500 10.500L13 8" stroke="#fff" /></S>
                          <S><path d="M11 1H17V7H11zM4 5H10V8H14V12H9V10H4zM1 12H8V17H1z" fill="#3a4145" /></S>
                        </ToolGroup>
                      </Row>
                    </Section>
                    <Section $h={116} $top={7}>
                      <Row $h={24}><Label>Color</Label></Row>
                      <Row $h={25}><Label $w={90}>Background</Label><Swatch $c="#ff00ff"><S w={10} h={7}><path d="M0 0H10V7H0z" fill="#3a3f42" /><path d="M3 2.500H9L6 6z" fill="#e000e0" /></S></Swatch></Row>
                      <Row $h={25}><Label $w={90}>Border</Label><Swatch $c="#000"><S w={10} h={7}><path d="M0 0H10V7H0z" fill="#3a3f42" /><path d="M3 2.500H9L6 6z" fill="#000" /></S></Swatch></Row>
                      <Row $h={25}>
                        <Label $w={91}>Opacity</Label>
                        <S w={98} h={24}>
                          <path d="M2 2V6M24 2V6M46 2V6M68 2V6M89 2V6" stroke="#777" />
                          <rect x="1.500" y="12.500" width="90" height="5" rx="2.500" fill="#f4f5f4" stroke="#aaa" />
                          <path d="M86 4H94Q96 4 96 6V12Q95 16 90 19Q84.500 16 84 12V6Q84 4 86 4Z" fill="#f7f8f7" stroke="#999" />
                        </S>
                      </Row>
                    </Section>
                    <Section $h={68} $top={6}>
                      <Row $h={20}><Label>Icon</Label></Row>
                      <Row $h={36}>
                        <SearchButton>
                          <S w={14} h={14}><circle cx="5.500" cy="5.500" r="4" stroke="#363f43" strokeWidth="2" /><path d="M8.500 8.500L13 13" stroke="#363f43" strokeWidth="2.600" /></S>
                          Icon Search
                        </SearchButton>
                        <TrayGap $w={6} />
                        <S w={20} h={20}><path d="M1 3H18M1 8H10M1 13H7" stroke="#3a4145" strokeWidth="2" /><circle cx="12" cy="11" r="4" stroke="#7a8184" strokeWidth="1.500" /><path d="M15 14L18 17" stroke="#3a4145" strokeWidth="2" /></S>
                        <TrayGap $w={7} />
                        <S w={20} h={20}><path d="M6 7L12 12.500L6 18L.5 12.500Z" stroke="#555c5f" /><path d="M9 2Q11 0 14 .5H18.500V10C18.500 15 16 17 12 18C14.500 15 14.500 12 12.500 9C14 6 13 4 9 4Z" fill="#3a4145" /></S>
                        <TrayGap $w={9} />
                        <S w={20} h={20}><circle cx="9.500" cy="10" r="9.300" fill="#3a4145" /><path d="M6 6.500L13 13.500M13 6.500L6 13.500" stroke="#fff" strokeWidth="2.500" /></S>
                      </Row>
                    </Section>
                    <Section $h={67} $top={6}>
                      <Row $h={20}><Label $w={45}>Links</Label><Help>?</Help></Row>
                      <Row $h={32}>
                        <Select>No Link<SelectArrow><Tri dir="down" c="#222" /></SelectArrow></Select>
                        <HideLink>Hide</HideLink>
                      </Row>
                    </Section>
                    <Section $h={100} $top={4}>
                      <Row $h={26} $align="flex-start"><Label $top={4}>Shape</Label></Row>
                      {shapes.map((row, r) => (
                        <ShapeRow key={r}>
                          {row.map((shape, i) => (
                            <ShapeCell key={i} $on={r === 0 && i === 2}><S stroke="#454c50" strokeWidth="1">{shape}</S></ShapeCell>
                          ))}
                        </ShapeRow>
                      ))}
                    </Section>
                  </Sections>
                  <InspectorScroll>
                    <Tri /><VThumb $w={9} $h={398} $top={2} /><Tri dir="down" />
                  </InspectorScroll>
                </InspectorBody>
              </Inspector>
            </Body>
            <Taskbar>
              {taskIcons.map((icon, i) => (i === 11 ? <TaskTile key={i}>{icon}</TaskTile> : <TaskItem key={i}>{icon}</TaskItem>))}
              <Tray>
                <S w={14} h={14}><path d="M1 10L7 4L13 10" stroke={ink} strokeWidth="1.400" /></S>
                <TrayGap $w={36} />
                <S w={16} h={16}><path d="M2 14C2 8 7 3 14 2M5 14C6 9 9 6 14 5M8 14C9 11 11 9 14 8.500" stroke={ink} strokeWidth="1.200" /><circle cx="12.500" cy="13" r="1.500" fill={ink} /></S>
                <TrayGap $w={6} />
                <S w={18} h={16}><path d="M1 5.500H4L8 2V14L4 10.500H1zM10.500 5.500Q12 8 10.500 10.500M13 4Q15.500 8 13 12M15.500 2.500Q19 8 15.500 13.500" stroke={ink} strokeWidth="1.100" /></S>
                <TrayGap $w={8} />
                英
              </Tray>
            </Taskbar>
          </Screen>
          <Progress><Played /><Buffered /></Progress>
          <Footing />
          <CommentLayer>
            <FlyingComment $x={-25} $row={0}>氏牛啊</FlyingComment>
            <FlyingComment $x={526} $row={0}>牛逼</FlyingComment>
            <FlyingComment $x={1167} $row={0}>三个人正在</FlyingComment>
            <FlyingComment $x={-9.5} $row={1}>这样来的</FlyingComment>
            <FlyingComment $x={636} $row={1}>这样就不能求平均了吧?</FlyingComment>
            <FlyingComment $x={1262} $row={1}>相当于</FlyingComment>
            <PlayBadge width="130" height="120" viewBox="0 0 130 120">
              <g style={{ filter: 'drop-shadow(0 1px 2px rgba(0,0,0,.45))' }}>
                <path d="M43 14L50 25M84 14L77 25" stroke="#fff" strokeWidth="8.500" strokeLinecap="round" opacity=".95" />
                <path
                  fillRule="evenodd"
                  fill="#fff"
                  fillOpacity=".95"
                  d="M30 25Q64 23 98 25Q115 27 117 44Q119 67 117 90Q115 108 98 110Q64 113 30 110Q13 108 11 90Q9 67 11 44Q13 27 30 25ZM47 52V84Q48 90 54 87L82 72Q87 68 82 64L56 49Q48 44 47 52Z"
                />
              </g>
            </PlayBadge>
          </CommentLayer>
        </Frame>
      </Page>
    </>
  );
}
